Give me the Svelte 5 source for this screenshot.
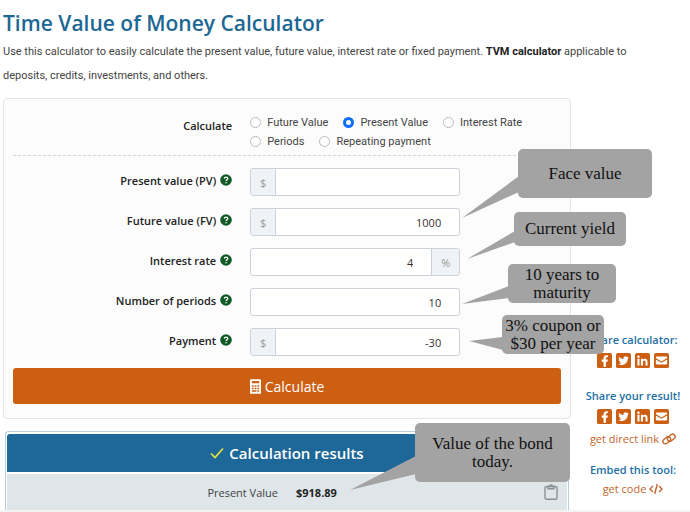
<script>
  let mode = $state('pv');

  const modes = [
    { id: 'fv', label: 'Future Value' },
    { id: 'pv', label: 'Present Value' },
    { id: 'rate', label: 'Interest Rate' },
    { id: 'periods', label: 'Periods' },
    { id: 'payment', label: 'Repeating payment' }
  ];

  let fields = $state([
    { id: 'pv', label: 'Present value (PV)', value: '', prefix: '$' },
    { id: 'fv', label: 'Future value (FV)', value: '1000', prefix: '$' },
    { id: 'rate', label: 'Interest rate', value: '4', suffix: '%' },
    { id: 'periods', label: 'Number of periods', value: '10' },
    { id: 'payment', label: 'Payment', value: '-30', prefix: '$' }
  ]);

  // annotation boxes, each with the triangle that points at its field
  const notes = [
    { text: 'Face value', x: 518, y: 149, w: 134, h: 49, tail: '462,218 519,176 519,192' },
    { text: 'Current yield', x: 514, y: 212, w: 112, h: 34, tail: '467,259 515,231 515,242' },
    { text: '10 years to maturity', x: 508, y: 264, w: 108, h: 39, tail: '462,304 509,286 509,298' },
    { text: '3% coupon or $30 per year', x: 502, y: 315, w: 102, h: 39, tail: '469,341 503,337 503,350' },
    { text: 'Value of the bond today.', x: 415, y: 423, w: 155, h: 59, tail: '350,490 416,456 416,474' }
  ];
</script>

{#snippet social()}
  <div class="social">
    <a href="#facebook" aria-label="Facebook">
      <svg viewBox="0 0 16 16" aria-hidden="true">
        <rect width="16" height="16" rx="2" />
        <path class="cut" d="M7 15V9.300H5V7h2V5.400C7 3.400 8.200 2.300 10 2.300c.8 0 1.600.1 1.600.1v2h-.9c-.9 0-1.200.5-1.200 1.100V7h2.100l-.4 2.300H9.500V15z" />
      </svg>
    </a>
    <a href="#twitter" aria-label="Twitter">
      <svg viewBox="0 0 16 16" aria-hidden="true">
        <rect width="16" height="16" rx="2" />
        <path class="cut" d="M13.700 4.700c-.4.200-.8.300-1.300.4.500-.3.800-.7 1-1.200-.4.200-.9.400-1.400.5a2.300 2.300 0 0 0-4 2.100C6 6.400 4.300 5.500 3.200 4.100c-.6 1-.3 2.300.7 3-.4 0-.7-.1-1-.3 0 1.100.8 2 1.800 2.300-.3.100-.7.100-1 0 .3.900 1.100 1.600 2.100 1.600A4.700 4.700 0 0 1 2.300 11.700c4.600 2.900 10.300-.1 10.300-5.900.4-.3.800-.7 1.100-1.100z" />
      </svg>
    </a>
    <a href="#linkedin" aria-label="LinkedIn">
      <svg viewBox="0 0 16 16" aria-hidden="true">
        <rect width="16" height="16" rx="2" />
        <circle class="cut" cx="3.700" cy="3.900" r="1.300" />
        <path class="cut" d="M2.600 6.200h2.200v7.200H2.600zM6.300 6.200h2.100v1c.4-.7 1.200-1.200 2.200-1.200 2.200 0 2.800 1.400 2.800 3.400v4h-2.200V9.900c0-.9 0-1.900-1.200-1.900-1.300 0-1.500.9-1.500 1.900v3.500H6.300z" />
      </svg>
    </a>
    <a href="#email" aria-label="Email">
      <svg viewBox="0 0 16 16" aria-hidden="true">
        <rect width="16" height="16" rx="2" />
        <path class="cut" d="M2 4.800C2 4.200 2.500 3.800 3 3.800h10c.5 0 1 .4 1 1v.5L8 9 2 5.300z" />
        <path class="cut" d="M2 6.800l6 3.700 6-3.700v4.500c0 .5-.5 1-1 1H3c-.5 0-1-.5-1-1z" />
      </svg>
    </a>
  </div>
{/snippet}

<div class="page">
  <h1>Time Value of Money Calculator</h1>
  <p class="intro">
    Use this calculator to easily calculate the present value, future value, interest rate or fixed payment.
    <strong>TVM calculator</strong> applicable to deposits, credits, investments, and others.
  </p>

  <div class="columns">
    <main>
      <form class="card" onsubmit={(e) => e.preventDefault()}>
        <div class="row modes" role="radiogroup" aria-labelledby="mode-label">
          <span class="label" id="mode-label">Calculate</span>
          <div class="options">
            {#each modes as m}
              <label class="option">
                <input type="radio" name="mode" value={m.id} bind:group={mode} />
                {m.label}
              </label>
            {/each}
          </div>
        </div>

        {#each fields as field}
          <div class="row">
            <label class="label" for={field.id}>
              {field.label}
              <svg class="help" viewBox="0 0 12 12" aria-hidden="true">
                <circle cx="6" cy="6" r="5.800" />
                <path d="M4.300 4.600c.1-1 .8-1.500 1.700-1.500 1 0 1.800.6 1.800 1.500 0 1.200-1.700 1.200-1.700 2.300" />
                <circle class="dot" cx="6.100" cy="8.700" r=".8" />
              </svg>
            </label>
            <div class="field">
              {#if field.prefix}<span class="addon">{field.prefix}</span>{/if}
              <input id={field.id} type="text" bind:value={field.value} />
              {#if field.suffix}<span class="addon suffix">{field.suffix}</span>{/if}
            </div>
          </div>
        {/each}

        <button class="submit" type="submit">
          <svg viewBox="0 0 12 16" aria-hidden="true">
            <path fill-rule="evenodd" d="M1 0h10a1 1 0 0 1 1 1v14a1 1 0 0 1-1 1H1a1 1 0 0 1-1-1V1a1 1 0 0 1 1-1zM2 2v2.500h8V2zM2 6.500v1.700h2V6.500zM5 6.500v1.700h2V6.500zM8 6.500v1.700h2V6.500zM2 9.300V11h2V9.300zM5 9.300V11h2V9.300zM8 9.300V11h2V9.300zM2 12.100v1.700h5v-1.700zM8 12.100v1.700h2v-1.700z" />
          </svg>
          Calculate
        </button>
      </form>

      <section class="results">
        <h2>
          <svg viewBox="0 0 14 12" aria-hidden="true"><path d="M1 6.500l4 4L13 1.500" /></svg>
          Calculation results
        </h2>
        <div class="result">
          <span class="result-name">Present Value</span>
          <strong>$918.89</strong>
          <button class="copy" type="button" aria-label="Copy result">
            <svg viewBox="0 0 14 16" aria-hidden="true">
              <rect x="1" y="2.500" width="12" height="12.700" rx="1.500" />
              <path d="M4 2.500h1.500a1.500 1.500 0 0 1 3 0H10v2.300H4z" />
            </svg>
          </button>
        </div>
      </section>
    </main>

    <aside>
      <section>
        <h3>Share calculator:</h3>
        {@render social()}
      </section>
      <section>
        <h3>Share your result!</h3>
        {@render social()}
        <a class="link" href="#direct">
          get direct link
          <svg class="chain" viewBox="0 0 14 12" aria-hidden="true">
            <rect x="0.500" y="4.800" width="8.500" height="5" rx="2.500" transform="rotate(-40 4.700 7.300)" />
            <rect x="5" y="2.200" width="8.500" height="5" rx="2.500" transform="rotate(-40 9.300 4.700)" />
          </svg>
        </a>
      </section>
      <section>
        <h3>Embed this tool:</h3>
        <a class="link" href="#embed">
          get code
          <svg class="code" viewBox="0 0 14 12" aria-hidden="true">
            <path d="M4 3L1 6l3 3M10 3l3 3-3 3M8.300 1L5.700 11" />
          </svg>
        </a>
      </section>
    </aside>
  </div>

  <div class="notes">
    <svg class="tails" aria-hidden="true">
      {#each notes as note}
        <polygon points={note.tail} />
      {/each}
    </svg>
    {#each notes as note}
      <div class="note" style="left: {note.x}px; top: {note.y}px; width: {note.w}px; height: {note.h}px">
        {note.text}
      </div>
    {/each}
  </div>
</div>

<style>
  :global(body) {
    margin: 0;
    background: #fff;
  }

  .page {
    position: relative;
    box-sizing: border-box;
    padding: 8px 0 0 3px;
    border-bottom: 2px solid #f3f3f4;
    overflow: hidden;
    font-family: "Segoe UI", "Open Sans", "Noto Sans", sans-serif;
    font-size: 11px;
    color: #444;
  }

  h1 {
    margin: 0;
    font-size: 21px;
    line-height: 30px;
    font-weight: 600;
    color: #1d6794;
  }

  .intro,
  .options {
    font-family: "Segoe UI", Roboto, sans-serif;
  }

  .intro {
    margin: 2px 40px 0 0;
    line-height: 24px;
  }

  strong {
    color: #222;
  }

  .columns {
    display: grid;
    grid-template-columns: 1fr 114px;
    gap: 5px;
    margin-top: 10px;
  }

  .card {
    padding: 14px 9px;
    border: 1px solid #e4e5e7;
    border-radius: 4px;
    background: #fcfcfc;
  }

  .row {
    display: grid;
    grid-template-columns: 40% 1fr;
    column-gap: 18px;
    margin-bottom: 12px;
  }

  .label {
    display: flex;
    justify-content: flex-end;
    align-items: center;
    gap: 4px;
    height: 24px;
    font-weight: 600;
    color: #222;
  }

  .modes {
    padding-bottom: 4px;
    border-bottom: 1px dashed #d4d4d4;
  }

  .options {
    display: flex;
    flex-wrap: wrap;
    column-gap: 15px;
  }

  .option {
    display: flex;
    align-items: center;
    gap: 6px;
    height: 19px;
    white-space: nowrap;
  }

  .option input {
    appearance: none;
    box-sizing: border-box;
    width: 11px;
    height: 11px;
    margin: 0;
    border: 1px solid #bbb;
    border-radius: 50%;
    background: #fff;
  }

  .option input:checked {
    border: 3px solid #0d6efd;
  }

  .help {
    width: 12px;
    height: 12px;
    fill: #115a26;
  }

  .help path {
    fill: none;
    stroke: #fff;
    stroke-width: 1.3;
  }

  .help .dot {
    fill: #fff;
  }

  .field {
    display: flex;
    box-sizing: border-box;
    width: 210px;
    height: 28px;
    border: 1px solid #ccd2d9;
    border-radius: 3px;
    background: #fff;
    overflow: hidden;
  }

  .field input {
    flex: 1;
    min-width: 0;
    padding: 0 18px;
    border: 0;
    background: none;
    font: inherit;
    color: #333;
    text-align: right;
  }

  .addon {
    display: flex;
    align-items: center;
    justify-content: center;
    width: 24px;
    border-right: 1px solid #ccd2d9;
    background: #eff2f6;
    color: #999;
  }

  .suffix {
    width: 27px;
    border-right: 0;
    border-left: 1px solid #ccd2d9;
  }

  .submit {
    display: flex;
    align-items: center;
    justify-content: center;
    gap: 4px;
    width: 100%;
    height: 36px;
    border: 0;
    border-radius: 3px;
    background: #cc5f12;
    font: inherit;
    font-size: 14px;
    color: #fff;
  }

  .submit svg {
    width: 11px;
    height: 15px;
    fill: #fff;
  }

  .results {
    margin: 12px 2px 0;
    padding: 2px 1px 0;
    border: 1px solid #b5d0dc;
    border-bottom: 0;
    border-radius: 4px 4px 0 0;
  }

  h2 {
    display: flex;
    align-items: center;
    justify-content: center;
    gap: 5px;
    height: 38px;
    margin: 0 0 2px;
    border-radius: 3px 3px 0 0;
    background: #1d6898;
    font-size: 15px;
    font-weight: 600;
    color: #fff;
  }

  h2 svg {
    width: 14px;
    height: 12px;
    fill: none;
    stroke: #e3e338;
    stroke-width: 1.7;
  }

  .result {
    display: grid;
    grid-template-columns: 1fr 1fr 14px;
    align-items: center;
    column-gap: 18px;
    height: 36px;
    padding: 0 9px 0 41px;
    background: #dee6e9;
  }

  .result-name {
    text-align: right;
  }

  .copy {
    width: 14px;
    height: 16px;
    padding: 0;
    border: 0;
    background: none;
  }

  .copy svg {
    display: block;
    fill: none;
    stroke: #8b9297;
    stroke-width: 1.4;
  }

  aside {
    display: flex;
    flex-direction: column;
    justify-content: flex-end;
    gap: 12px;
    padding-bottom: 12px;
    text-align: center;
  }

  h3 {
    margin: 0;
    font-size: 11px;
    line-height: 20px;
    font-weight: 600;
    color: #1d6fa5;
  }

  .social {
    display: flex;
    justify-content: center;
    gap: 4px;
    padding: 3px 0 6px;
  }

  .social svg {
    display: block;
    width: 15px;
    height: 15px;
    fill: #cc5f12;
  }

  .social .cut {
    fill: #fff;
  }

  .link {
    display: flex;
    align-items: center;
    justify-content: center;
    gap: 3px;
    line-height: 18px;
    color: #c4662c;
    text-decoration: none;
  }

  .link svg {
    width: 14px;
    height: 12px;
    fill: none;
    stroke: #c4662c;
    stroke-width: 1.4;
  }

  .notes {
    position: absolute;
    inset: 0;
    pointer-events: none;
  }

  .tails {
    position: absolute;
    width: 100%;
    height: 100%;
    fill: #a3a3a3;
  }

  .note {
    position: absolute;
    display: flex;
    box-sizing: border-box;
    align-items: center;
    justify-content: center;
    border-radius: 5px;
    background: #a3a3a3;
    font-family: Georgia, "Liberation Serif", serif;
    font-size: 17px;
    line-height: 18px;
    color: #111;
    text-align: center;
  }
</style>
